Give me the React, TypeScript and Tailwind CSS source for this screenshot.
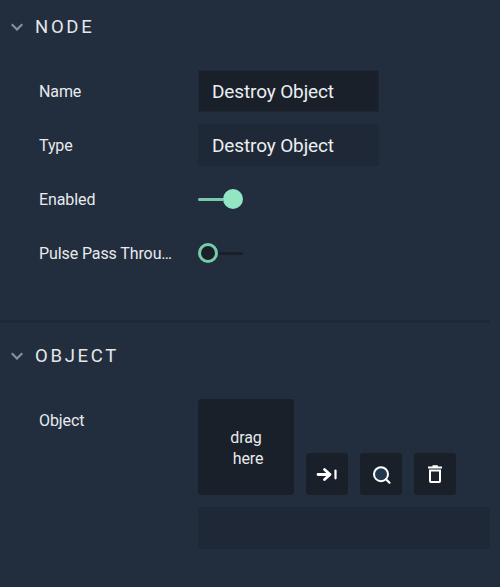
import type { ReactNode } from "react";

function SectionTitle({ children }: { children: ReactNode }) {
  return (
    <h2 className="flex h-[54px] items-center pl-[11px] text-[18.5px] tracking-[2.7px] text-[#e4e7eb]">
      <svg className="mr-[12px] h-2 w-3 shrink-0" viewBox="0 0 12 8" fill="none" stroke="#88909b" strokeWidth="2.2">
        <path d="M0.7 1.2 L6 6.5 L11.3 1.2" />
      </svg>
      <span className="pt-[2px]">{children}</span>
    </h2>
  );
}

function Row({ label, children }: { label: string; children: ReactNode }) {
  return (
    <div className="flex h-[42px] items-center pl-[39px]">
      <span className="w-[159px] shrink-0 pt-[2px] text-[16px] tracking-[-0.1px] text-[#e8eaed]">{label}</span>
      {children}
    </div>
  );
}

function IconButton({ label, children }: { label: string; children: ReactNode }) {
  return (
    <button aria-label={label} className="flex size-[42px] items-center justify-center rounded-[3px] bg-[#19202a]">
      <svg width="42" height="42" viewBox="0 0 42 42" fill="none" stroke="#fff">
        {children}
      </svg>
    </button>
  );
}

export default function App() {
  return (
    <div className="h-[587px] w-[500px] overflow-hidden bg-[#222d3d] font-['Roboto',sans-serif]">
      <section className="h-[320px]">
        <SectionTitle>NODE</SectionTitle>
        <div className="flex flex-col gap-3 pt-4">
          <Row label="Name">
            <div className="flex h-[42px] w-[181px] items-center border border-[#1e2734] bg-[#19202a] pl-[13px] pt-[2px] text-[19px] tracking-[-0.13px] text-[#eceef0]">
              Destroy Object
            </div>
          </Row>
          <Row label="Type">
            <div className="flex h-[42px] w-[181px] items-center bg-[#1f2836] pl-[14px] pt-[2px] text-[19px] tracking-[-0.13px] text-[#eceef0]">
              Destroy Object
            </div>
          </Row>
          <Row label="Enabled">
            <div className="flex w-[45px] items-center">
              <div className="h-[3px] flex-1 rounded-l bg-[#77cbab]" />
              <div className="size-5 rounded-full bg-[#93e6c4]" />
            </div>
          </Row>
          <Row label="Pulse Pass Throu…">
            <div className="flex w-[45px] items-center">
              <div className="size-5 rounded-full border-[3px] border-[#77cbab] bg-[#19202a]" />
              <div className="h-[3px] flex-1 rounded-r bg-[#19202a]" />
            </div>
          </Row>
        </div>
      </section>

      <div className="h-[3px] w-[490px] bg-[#1e2836]" />

      <section className="pt-[6px]">
        <SectionTitle>OBJECT</SectionTitle>
        <div className="flex pl-[39px] pt-4">
          <span className="w-[159px] shrink-0 pt-[10px] text-[16px] leading-6 tracking-[-0.1px] text-[#e8eaed]">Object</span>
          <div>
            <div className="flex items-end gap-3">
              <div className="flex size-24 flex-col items-center justify-center rounded-[3px] bg-[#19202a] pt-[2px] text-[16px] leading-[21px] tracking-[-0.1px] text-[#e8eaed]">
                <span>drag</span>
                <span className="pl-1">here</span>
              </div>
              <IconButton label="Go to">
                <path d="M12 21.5H24M18.5 16.5L24 21.5L18.5 26.5" strokeWidth="2.8" strokeLinecap="round" strokeLinejoin="round" />
                <path d="M29.5 17.5V25.3" strokeWidth="2.2" strokeLinecap="round" />
              </IconButton>
              <IconButton label="Find">
                <circle cx="21" cy="21.2" r="7" fill="#21384e" strokeWidth="2" />
                <path d="M26 26.2L29.5 29.7" strokeWidth="2.2" strokeLinecap="round" />
              </IconButton>
              <IconButton label="Delete">
                <path d="M14 14.5H28M18.5 13.3H23.8" strokeWidth="1.9" />
                <path d="M16 17.5H26V28.2Q26 29 25.2 29H16.8Q16 29 16 28.2Z" strokeWidth="2" />
              </IconButton>
            </div>
            <div className="mt-3 h-[42px] w-[292px] bg-[#1f2836]" />
          </div>
        </div>
      </section>
    </div>
  );
}
